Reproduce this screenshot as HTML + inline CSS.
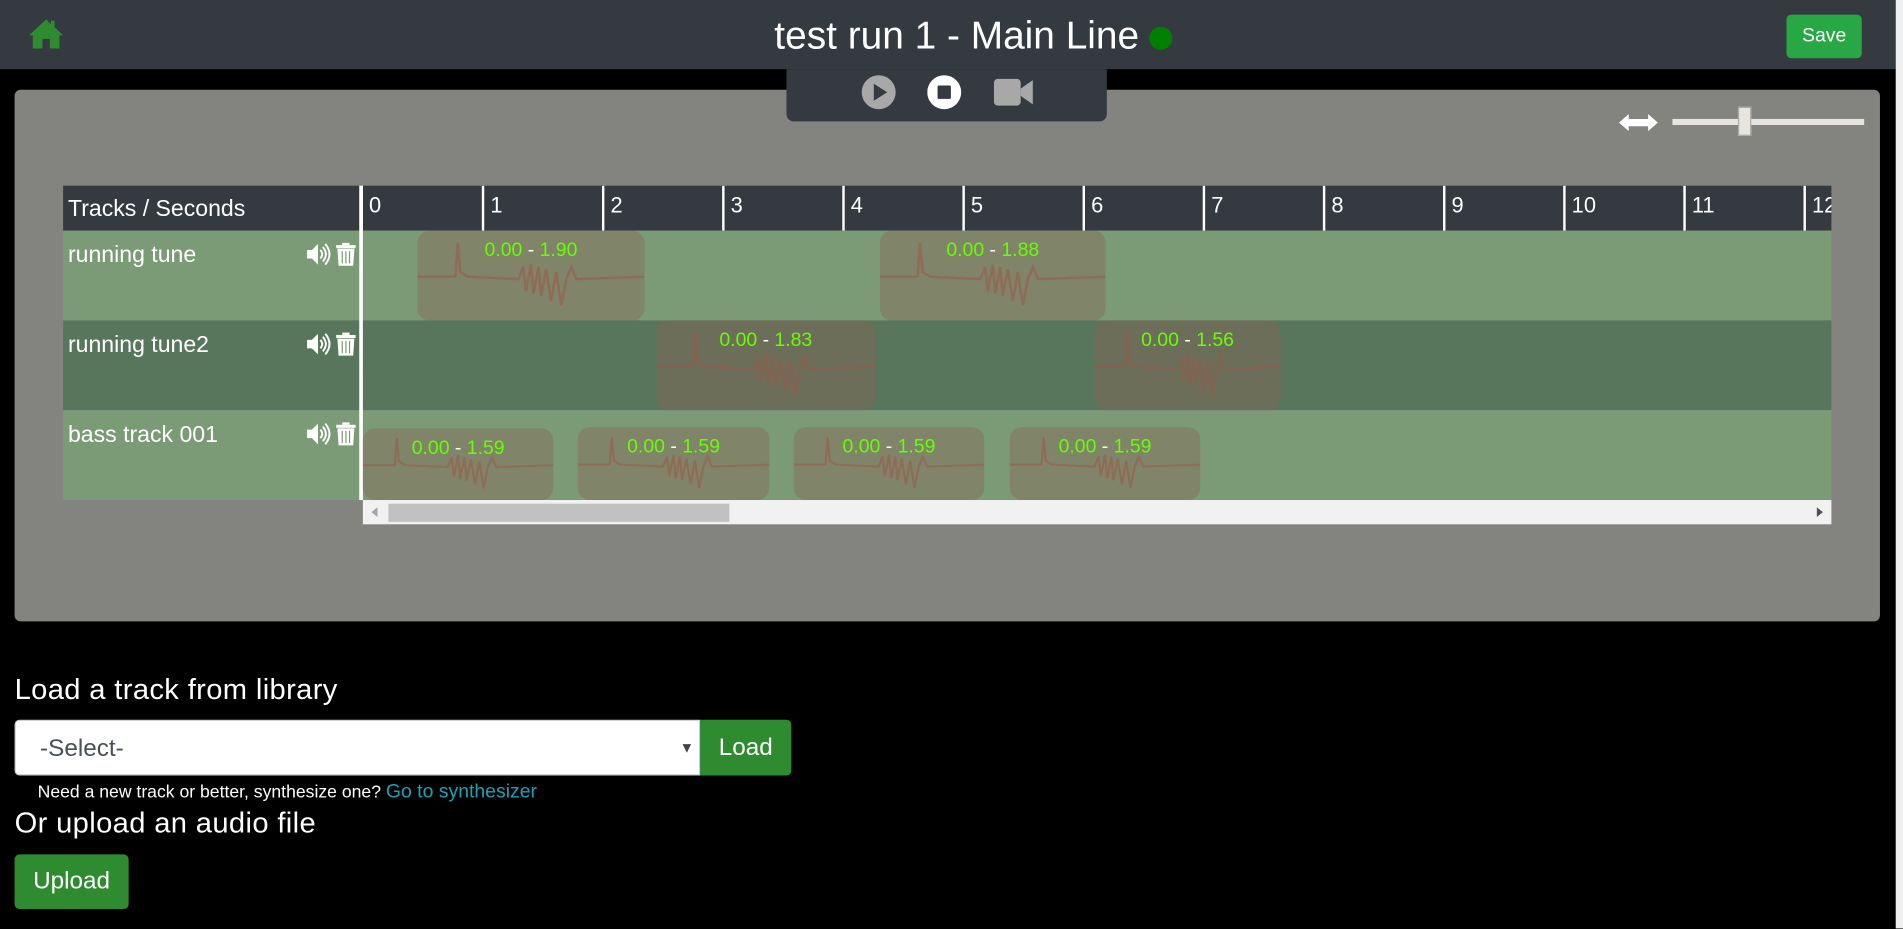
<!DOCTYPE html>
<html><head><meta charset="utf-8">
<style>
html,body{margin:0;padding:0;background:#000;width:1903px;height:929px;overflow:hidden;font-family:"Liberation Sans",Arial,sans-serif}
#w{position:absolute;left:0;top:0;width:1568px;height:765px;transform:scale(1.21365);transform-origin:0 0;color:#fff}
.a{position:absolute}
.hdr{left:0;top:0;width:1562px;height:57px;background:#343a40}
.btn{background:#2e8b30;color:#fff;border-radius:4px;text-align:center}
.tk{position:absolute;top:0;height:37px;border-left:2px solid #fff;font-size:18px;padding-left:5px;line-height:32px;box-sizing:border-box}
.row{position:absolute;left:52px;width:1457px;height:74px}
.clip{position:absolute;background:rgba(135,100,85,.42);border-radius:10px;overflow:hidden}
.clip .t{position:absolute;left:0;right:0;top:8px;text-align:center;font-size:16px;color:#6f0}
.clip .t b{color:#fff;font-weight:normal}
.clip svg{position:absolute;left:0;top:0;width:100%;height:100%}
.nm{position:absolute;left:4px;top:10px;font-size:19px}
</style></head><body><div id="w">
<div class="a hdr"></div>
<div class="a" style="left:1562px;top:0;width:6px;height:765px;background:#f0f0f0"></div>
<svg class="a" style="left:23px;top:14px" width="30" height="28" viewBox="0 0 30 28"><path d="M15 2 L1 15 L4 15 L4 26 L12 26 L12 18 L18 18 L18 26 L26 26 L26 15 L29 15 L22 8.5 L22 3 L19 3 L19 6 Z" fill="#2e8b30"/></svg>
<div class="a" style="left:638px;top:11px;font-size:32px;white-space:nowrap">test run 1 - Main Line <span style="display:inline-block;width:19px;height:19px;border-radius:50%;background:#008000;vertical-align:-1px"></span></div>
<div class="a btn" style="left:1472px;top:12px;width:62px;height:36px;line-height:36px;font-size:16px;background:#28a745">Save</div>

<div class="a" style="left:12px;top:74px;width:1537px;height:438px;background:#838480;border-radius:5px"></div>
<div class="a" style="left:648px;top:57px;width:264px;height:43px;background:#343a40;border-radius:0 0 6px 6px"></div>
<svg class="a" style="left:709px;top:61px" width="30" height="30"><circle cx="15" cy="15" r="14" fill="#a8a8a8"/><path d="M11 8 L22 15 L11 22Z" fill="#343a40"/></svg>
<svg class="a" style="left:764px;top:61px" width="30" height="30"><circle cx="14" cy="15" r="14" fill="#fff"/><rect x="8.5" y="9.5" width="11" height="11" rx="1" fill="#343a40"/></svg>
<svg class="a" style="left:818px;top:64px" width="34" height="24"><rect x="1" y="1" width="22" height="22" rx="3" fill="#a8a8a8"/><path d="M23 9 L33 2 L33 22 L23 15Z" fill="#a8a8a8"/></svg>
<svg class="a" style="left:1333px;top:93px" width="34" height="16"><path d="M1 8 L9 1 L9 5 L25 5 L25 1 L33 8 L25 15 L25 11 L9 11 L9 15Z" fill="#fff"/></svg>
<div class="a" style="left:1378px;top:98px;width:158px;height:5px;background:#e8e4de"></div>
<div class="a" style="left:1432px;top:88px;width:11px;height:24px;background:#e8e4de;border:1px solid #aaa;box-sizing:border-box"></div>

<div class="a" style="left:52px;top:153px;width:1457px;height:37px;background:#343a40;overflow:hidden">
<div class="a" style="left:4px;top:9px;font-size:19px">Tracks / Seconds</div>
<div class="tk" style="left:245px">0</div><div class="tk" style="left:345px">1</div><div class="tk" style="left:444px">2</div><div class="tk" style="left:543px">3</div><div class="tk" style="left:642px">4</div><div class="tk" style="left:741px">5</div><div class="tk" style="left:840px">6</div><div class="tk" style="left:939px">7</div><div class="tk" style="left:1038px">8</div><div class="tk" style="left:1137px">9</div><div class="tk" style="left:1236px">10</div><div class="tk" style="left:1335px">11</div><div class="tk" style="left:1434px">12</div>
</div>

<svg width="0" height="0" style="position:absolute"><defs><symbol id="wv" viewBox="0 0 180 74" preserveAspectRatio="none"><path d="M0 38 L30 38 L32 10 L34 34 L40 38 L80 40 L84 30 L86 50 L90 28 L92 52 L96 30 L98 54 L102 32 L106 58 L110 34 L114 62 L118 40 L122 30 L126 40 L180 38" stroke="#9a5a48" stroke-width="2" fill="none" opacity=".55"/></symbol></defs></svg>

<div class="row" style="top:190px;background:#7b9b76"><div class="nm">running tune</div></div>
<div class="row" style="top:264px;background:#58765c"><div class="nm">running tune2</div></div>
<div class="row" style="top:338px;background:#7b9b76"><div class="nm">bass track 001</div></div>
<div class="a" style="left:296px;top:153px;width:3px;height:259px;background:#fff"></div>

<div class="clip" style="left:344px;top:190px;width:187px;height:74px"><svg><use href="#wv"/></svg><div class="t">0.00 <b>-</b> 1.90</div></div>
<div class="clip" style="left:725px;top:190px;width:186px;height:74px"><svg><use href="#wv"/></svg><div class="t">0.00 <b>-</b> 1.88</div></div>
<div class="clip" style="left:541px;top:264px;width:180px;height:74px"><svg><use href="#wv"/></svg><div class="t">0.00 <b>-</b> 1.83</div></div>
<div class="clip" style="left:902px;top:264px;width:153px;height:74px"><svg><use href="#wv"/></svg><div class="t">0.00 <b>-</b> 1.56</div></div>
<div class="clip" style="left:299px;top:353px;width:157px;height:59px"><svg><use href="#wv"/></svg><div class="t">0.00 <b>-</b> 1.59</div></div>
<div class="clip" style="left:476px;top:352px;width:158px;height:60px"><svg><use href="#wv"/></svg><div class="t">0.00 <b>-</b> 1.59</div></div>
<div class="clip" style="left:654px;top:352px;width:157px;height:60px"><svg><use href="#wv"/></svg><div class="t">0.00 <b>-</b> 1.59</div></div>
<div class="clip" style="left:832px;top:352px;width:157px;height:60px"><svg><use href="#wv"/></svg><div class="t">0.00 <b>-</b> 1.59</div></div>

<svg class="a" style="left:252px;top:200px" width="45" height="220">
<g id="icons"><path d="M1 6 L5 6 L10 1 L10 18 L5 13 L1 13Z" fill="#fff"/><path d="M12 6 Q15 9.5 12 13 M14 3.5 Q19 9.5 14 15.5 M16 1 Q23 9.5 16 18" stroke="#fff" stroke-width="1.6" fill="none"/>
<rect x="25" y="2" width="16" height="2.5" fill="#fff"/><rect x="30" y="0" width="6" height="2" fill="#fff"/><path d="M26 5 L40 5 L39 19 L27 19Z" fill="#fff"/><path d="M30 7 V17 M33 7 V17 M36 7 V17" stroke="#7b9b76" stroke-width="1"/></g>
<use href="#icons" y="74"/><use href="#icons" y="148"/></svg>

<div class="a" style="left:299px;top:412px;width:1210px;height:20px;background:#f1f1f1"></div>
<div class="a" style="left:320px;top:415px;width:281px;height:15px;background:#c1c1c1"></div>
<svg class="a" style="left:305px;top:417px" width="8" height="10"><path d="M6 1 L1 5 L6 9Z" fill="#a3a3a3"/></svg>
<svg class="a" style="left:1496px;top:417px" width="8" height="10"><path d="M1 1 L6 5 L1 9Z" fill="#505050"/></svg>

<div class="a" style="left:12px;top:555px;font-size:24px;letter-spacing:0.3px">Load a track from library</div>
<div class="a" style="left:12px;top:593px;width:565px;height:46px;background:#fff;border:1px solid #ccc;box-sizing:border-box;border-radius:4px 0 0 4px"></div>
<div class="a" style="left:33px;top:606px;font-size:20px;color:#495057">-Select-</div>
<div class="a" style="left:560px;top:609px;font-size:12px;color:#444">▼</div>
<div class="a btn" style="left:577px;top:593px;width:75px;height:46px;line-height:46px;font-size:20px;border-radius:0 4px 4px 0">Load</div>
<div class="a" style="left:31px;top:644px;font-size:14.5px">Need a new track or better, synthesize one? <span style="color:#17a2b8;font-size:16px">Go to synthesizer</span></div>
<div class="a" style="left:12px;top:665px;font-size:24px;letter-spacing:0.3px">Or upload an audio file</div>
<div class="a btn" style="left:12px;top:704px;width:94px;height:45px;line-height:45px;font-size:20px">Upload</div>
</div></body></html>
